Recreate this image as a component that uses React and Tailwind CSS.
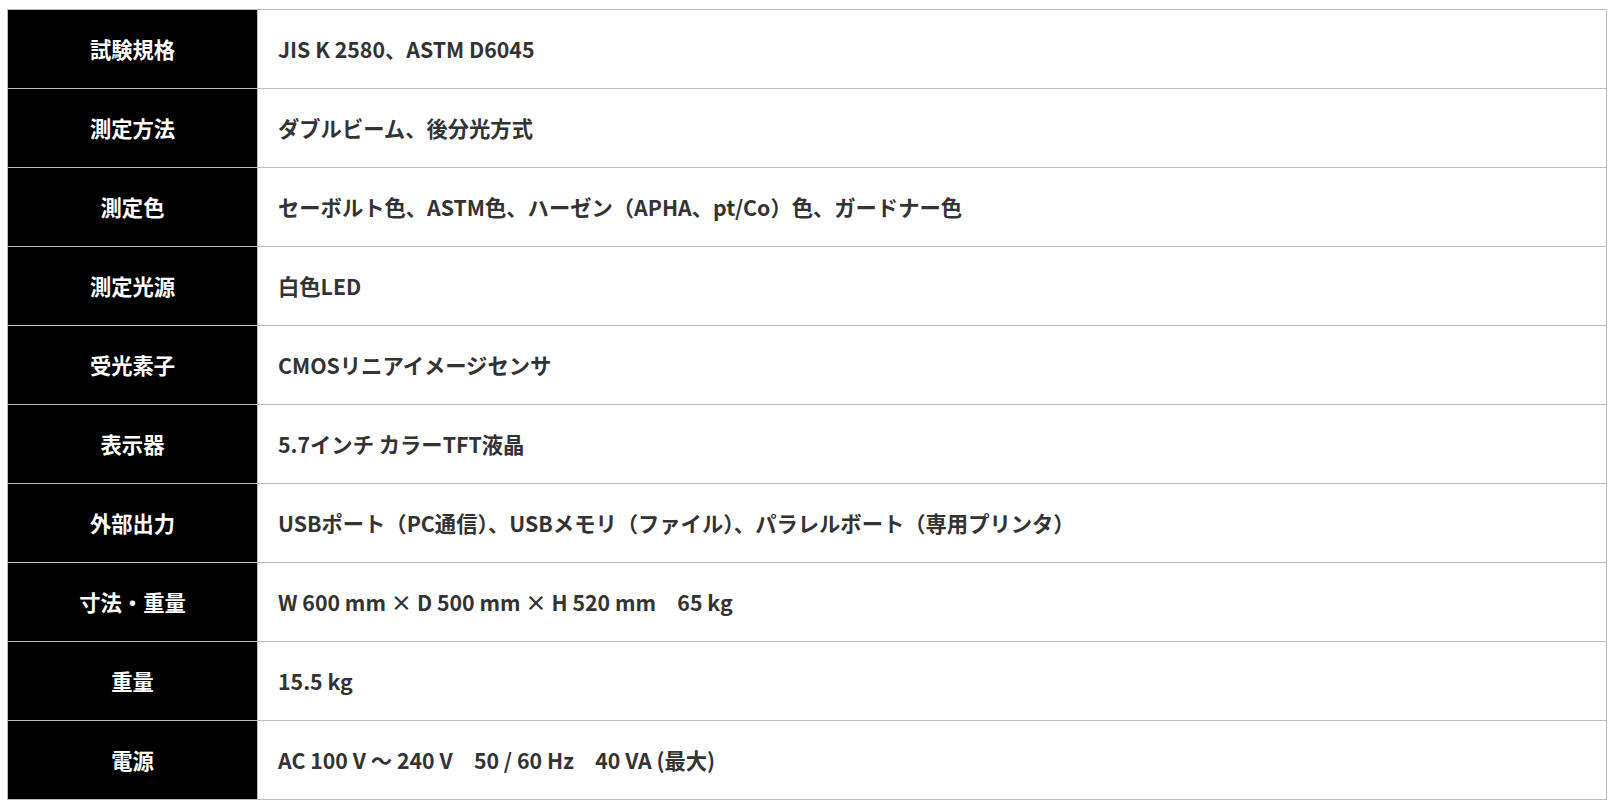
const rows = [
  ["試験規格", "JIS K 2580、ASTM D6045"],
  ["測定方法", "ダブルビーム、後分光方式"],
  ["測定色", "セーボルト色、ASTM色、ハーゼン（APHA、pt/Co）色、ガードナー色"],
  ["測定光源", "白色LED"],
  ["受光素子", "CMOSリニアイメージセンサ"],
  ["表示器", "5.7インチ カラーTFT液晶"],
  ["外部出力", "USBポート（PC通信）、USBメモリ（ファイル）、パラレルボート（専用プリンタ）"],
  ["寸法・重量", "W 600 mm × D 500 mm × H 520 mm　65 kg"],
  ["重量", "15.5 kg"],
  ["電源", "AC 100 V ～ 240 V　50 / 60 Hz　40 VA (最大)"],
]

export default function App() {
  return (
    <div
      className="min-h-screen bg-white pt-[9px] pl-[7px]"
      style={{ fontFamily: '"Noto Sans CJK JP", "Noto Sans", sans-serif' }}
    >
      <table className="w-[1600px] border-collapse border border-[#bcbcbc]">
        <tbody>
          {rows.map(([label, value]) => (
            <tr key={label} className="h-[79px]">
              <th className="w-[250px] border border-[#bcbcbc] bg-black text-center text-[21.3px] font-bold text-white">
                {label}
              </th>
              <td className="border border-[#bcbcbc] pl-[20px] text-left text-[21.3px] font-bold text-[#333]">
                {value}
              </td>
            </tr>
          ))}
        </tbody>
      </table>
    </div>
  )
}
